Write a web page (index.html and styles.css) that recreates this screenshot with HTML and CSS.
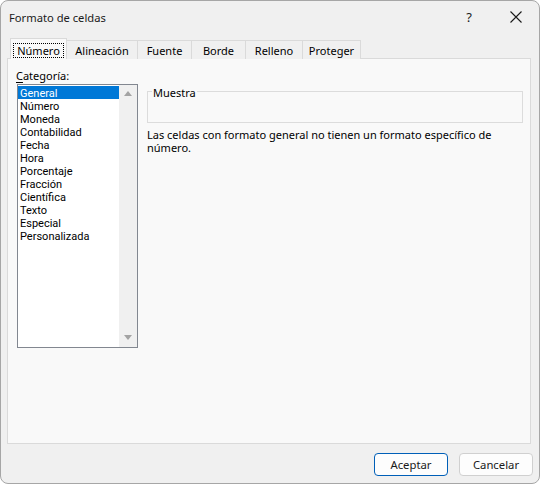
FILE: index.html
```html
<!DOCTYPE html>
<html lang="es">
<head>
<meta charset="utf-8">
<title>Formato de celdas</title>
<link rel="stylesheet" href="styles.css">
</head>
<body>
<div class="window">
  <div class="titlebar">
    <span class="title">Formato de celdas</span>
    <span class="tb-btn help">?</span>
    <span class="tb-btn close">
      <svg width="12" height="12" viewBox="0 0 12 12"><path d="M0.5 0.5 L11.5 11.5 M11.5 0.5 L0.5 11.5" stroke="#1a1a1a" stroke-width="1.1" fill="none"/></svg>
    </span>
  </div>
  <div class="content">
    <div class="tabs">
      <div class="tab active"><span class="focus">Número</span></div>
      <div class="tab w-alin">Alineación</div>
      <div class="tab w-fuente">Fuente</div>
      <div class="tab w-borde">Borde</div>
      <div class="tab w-relleno">Relleno</div>
      <div class="tab w-proteger">Proteger</div>
    </div>
    <div class="panel">
      <div class="left">
        <div class="label"><u>C</u>ategoría:</div>
        <div class="listbox">
          <ul class="items">
            <li class="sel">General</li>
            <li>Número</li>
            <li>Moneda</li>
            <li>Contabilidad</li>
            <li>Fecha</li>
            <li>Hora</li>
            <li>Porcentaje</li>
            <li>Fracción</li>
            <li>Científica</li>
            <li>Texto</li>
            <li>Especial</li>
            <li>Personalizada</li>
          </ul>
          <div class="scrollbar">
            <span class="arrow up"></span>
            <span class="arrow down"></span>
          </div>
        </div>
      </div>
      <div class="right">
        <fieldset class="sample">
          <legend>Muestra</legend>
          <div class="sample-body"></div>
        </fieldset>
        <p class="desc">Las celdas con formato general no tienen un formato específico de número.</p>
      </div>
    </div>
  </div>
  <div class="footer">
    <button class="btn default">Aceptar</button>
    <button class="btn">Cancelar</button>
  </div>
</div>
</body>
</html>
```

FILE: styles.css
```css
html, body {
  margin: 0;
  padding: 0;
  background: #ffffff;
}

body {
  font-family: "Noto Sans", "DejaVu Sans", sans-serif;
  font-size: 11px;
  color: #000;
}

.window {
  width: 540px;
  height: 484px;
  box-sizing: border-box;
  border: 1px solid #a6a6a6;
  border-radius: 8px;
  background: #f0f0f0;
  display: flex;
  flex-direction: column;
  overflow: hidden;
}

.titlebar {
  height: 31px;
  display: flex;
  align-items: center;
  padding-left: 8px;
  flex-shrink: 0;
}

.title {
  flex: 1;
  font-size: 11.2px;
  color: #1a1a1a;
  padding-top: 1px;
}

.tb-btn {
  width: 46px;
  height: 31px;
  display: flex;
  align-items: center;
  justify-content: center;
  color: #1a1a1a;
}

.help {
  font-size: 13px;
  padding-right: 2px;
  box-sizing: border-box;
}

.content {
  padding: 8px 8px 0 6px;
  display: flex;
  flex-direction: column;
}

.tabs {
  display: flex;
  height: 19px;
  padding-left: 3px;
  margin-bottom: -1px;
  position: relative;
  z-index: 1;
  align-items: flex-end;
}

.tab {
  box-sizing: border-box;
  height: 19px;
  border: 1px solid #dadada;
  border-bottom: none;
  margin-left: -1px;
  background: #f0f0f0;
  display: flex;
  align-items: center;
  justify-content: center;
  padding-top: 1px;
}

.tab.active {
  width: 57px;
  height: 21px;
  margin-left: 0;
  background: #f9f9f9;
  padding-top: 2px;
}

.focus {
  border: 1px dotted #000;
  padding: 0 3px;
  line-height: 13px;
}

.w-alin { width: 72px; }
.w-fuente { width: 55px; }
.w-borde { width: 55px; }
.w-relleno { width: 58px; }
.w-proteger { width: 59px; }

.panel {
  box-sizing: border-box;
  height: 386px;
  border: 1px solid #dadada;
  background: #f9f9f9;
  display: flex;
  padding: 9px 0 0 9px;
  gap: 9px;
}

.left {
  display: flex;
  flex-direction: column;
}

.label {
  margin-left: -1px;
  line-height: 15px;
  height: 16px;
}

.label u {
  text-decoration-thickness: 1px;
  text-underline-offset: 2px;
}

.listbox {
  box-sizing: border-box;
  width: 121px;
  height: 264px;
  border: 1px solid #828790;
  background: #fff;
  display: flex;
}

.items {
  list-style: none;
  margin: 0;
  padding: 1px 0 0 0;
  width: 101px;
  font-family: Roboto, "Noto Sans", sans-serif;
  font-size: 11px;
}

.items li {
  box-sizing: border-box;
  height: 13px;
  padding: 2px 0 0 2px;
  line-height: 11px;
  white-space: nowrap;
}

.items li.sel {
  background: #0078d7;
  color: #fff;
}

.scrollbar {
  width: 18px;
  background: #f0f0f0;
  display: flex;
  flex-direction: column;
  justify-content: space-between;
  align-items: center;
  padding: 6px 0 7px;
  box-sizing: border-box;
}

.arrow {
  width: 0;
  height: 0;
  border-left: 4px solid transparent;
  border-right: 4px solid transparent;
}

.arrow.up {
  border-bottom: 5px solid #a3a3a3;
}

.arrow.down {
  border-top: 5px solid #a3a3a3;
}

.right {
  width: 376px;
  display: flex;
  flex-direction: column;
  padding-top: 15px;
}

.sample {
  margin: 0;
  padding: 0;
  border: 1px solid #dcdcdc;
  min-width: 0;
}

.sample legend {
  padding: 3px 1px 0;
  margin-left: 4px;
  line-height: 13px;
}

.sample-body {
  height: 23px;
}

.desc {
  margin: 5px 0 0 0;
  line-height: 13px;
}

.footer {
  display: flex;
  justify-content: flex-end;
  gap: 11px;
  padding: 9px 6px 0 0;
}

.btn {
  width: 74px;
  height: 23px;
  box-sizing: border-box;
  border: 1px solid #d0d0d0;
  border-radius: 4px;
  background: #fdfdfd;
  font-family: "Noto Sans", "DejaVu Sans", sans-serif;
  font-size: 11.3px;
  color: #1a1a1a;
  padding: 0;
}

.btn.default {
  border-color: #005fb8;
}
```
